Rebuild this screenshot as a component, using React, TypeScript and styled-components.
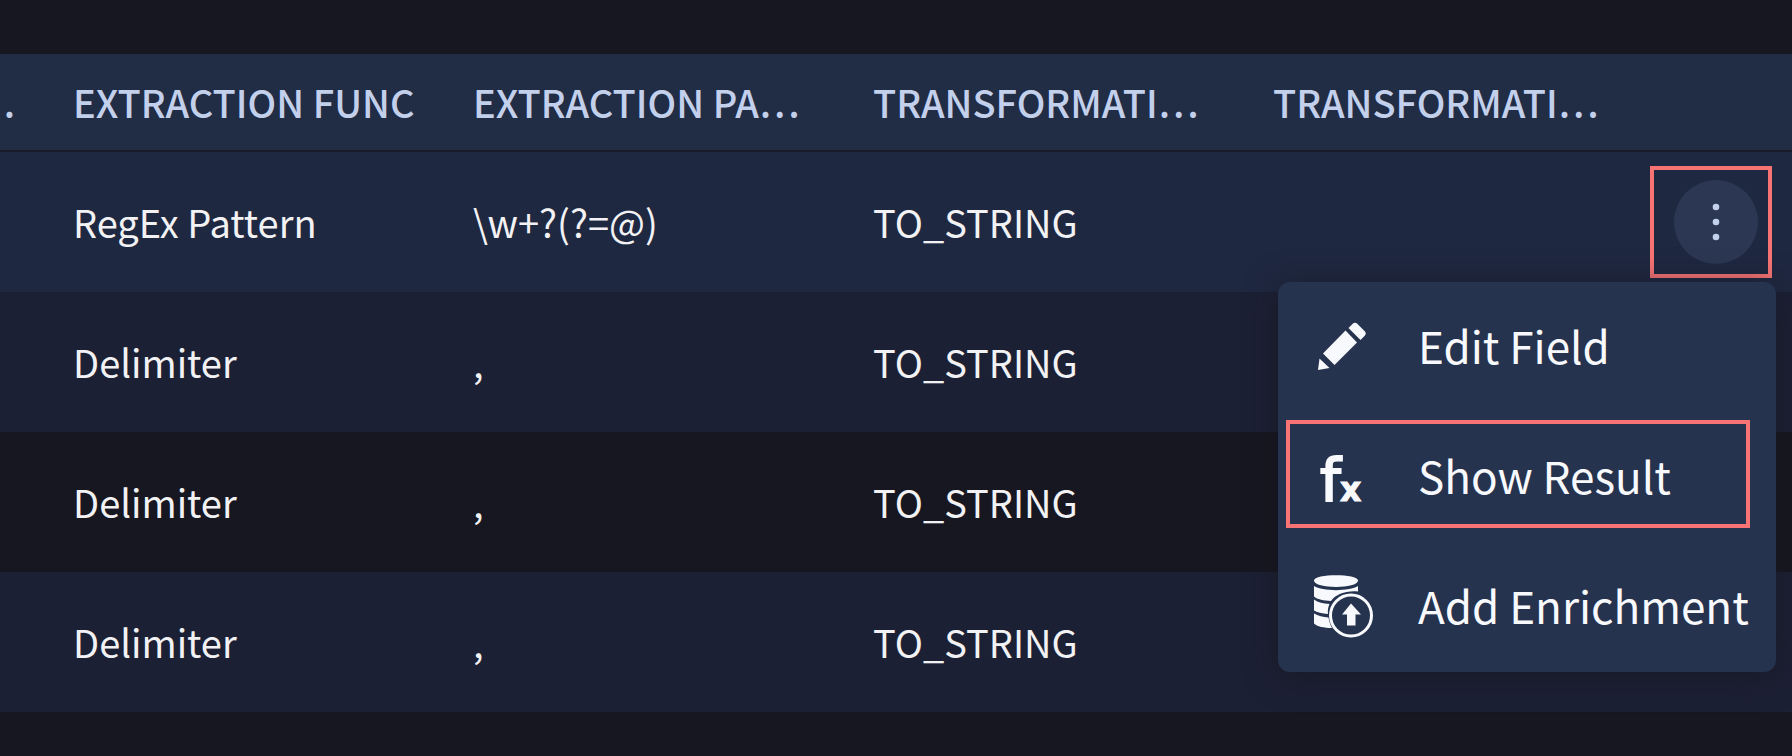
import React from 'react';
import styled, { createGlobalStyle } from 'styled-components';

const GlobalStyle = createGlobalStyle`
  * { box-sizing: border-box; }
  body {
    margin: 0;
    background: #171721;
    color: #f2f2f4;
    font-family: "Noto Sans CJK SC", "Noto Sans", sans-serif;
    overflow-x: hidden;
  }
`;

const Page = styled.main`
  padding: 54px 0 44px;
`;

const Table = styled.table`
  width: 100%;
  table-layout: fixed;
  border-collapse: separate;
  border-spacing: 0;
`;

const Col = styled.col<{ $width?: number }>`
  width: ${(p) => (p.$width ? `${p.$width}px` : 'auto')};
`;

const HeadCell = styled.th<{ $clipped?: boolean }>`
  height: 98px;
  padding: ${(p) => (p.$clipped ? '0 18px 0 0' : '0 24px 0 40px')};
  background: #212c45;
  border-bottom: 2px solid #1a1a29;
  color: #c3d0ec;
  font-size: 38px;
  font-weight: 500;
  line-height: 56px;
  text-align: ${(p) => (p.$clipped ? 'right' : 'left')};
  white-space: nowrap;
`;

const Row = styled.tr<{ $tone: 'active' | 'odd' | 'even' }>`
  background: ${(p) =>
    p.$tone === 'active' ? '#1f2841' : p.$tone === 'odd' ? '#1c2034' : '#171721'};
`;

const Cell = styled.td`
  height: 140px;
  padding: 0 0 0 40px;
  font-size: 38px;
  line-height: 56px;
  white-space: nowrap;
`;

const ActionCell = styled.td`
  position: relative;
  height: 140px;
  padding: 0 20px 0 0;
`;

const ActionFrame = styled.div`
  display: flex;
  align-items: center;
  justify-content: flex-end;
  width: 122px;
  height: 112px;
  margin-left: auto;
  padding-right: 10px;
  border: 4px solid #f87474;
`;

const KebabButton = styled.button`
  display: flex;
  align-items: center;
  justify-content: center;
  width: 84px;
  height: 84px;
  padding: 0;
  border: 0;
  border-radius: 50%;
  background: #2c3853;
  color: #c3d0ec;
`;

const Menu = styled.div`
  position: absolute;
  z-index: 1;
  top: 130px;
  right: 16px;
  width: 498px;
  border-radius: 12px;
  background: #26334f;
  box-shadow: 0 4px 32px rgba(20, 22, 28, 0.6);
`;

const MenuItem = styled.button`
  position: relative;
  display: flex;
  align-items: center;
  gap: 40px;
  width: 100%;
  height: 130px;
  padding: 0 0 4px 36px;
  border: 0;
  background: none;
  color: #f8f9fc;
  font-family: inherit;
  font-size: 44px;
  line-height: 64px;
  text-align: left;
  white-space: nowrap;
`;

const Highlight = styled.span`
  position: absolute;
  inset: 8px 26px 14px 8px;
  border: 4px solid #f87474;
`;

const Icon = styled.svg`
  flex: none;
  display: block;
  overflow: visible;
  fill: currentColor;
`;

const DotsIcon = () => (
  <Icon width="40" height="40" viewBox="0 0 40 40" aria-hidden="true">
    <circle cx="20" cy="5" r="3.3" />
    <circle cx="20" cy="20" r="3.3" />
    <circle cx="20" cy="35" r="3.3" />
  </Icon>
);

const PencilIcon = () => (
  <Icon width="64" height="64" viewBox="0 0 64 64" aria-hidden="true">
    <path d="M4 57 L5.500 45.500 L15.500 55 Z" />
    <path d="M9 40.500 L31.500 17.500 L43 29.500 L20.500 52 Z" />
    <path d="M34.500 15 L38.500 11 Q41 8.500 43.500 11 L50.500 18 Q53 20.500 50.500 23 L46.500 27 Z" />
  </Icon>
);

const FxIcon = () => (
  <Icon
    width="64"
    height="64"
    viewBox="0 0 64 64"
    aria-hidden="true"
    fontFamily="DejaVu Sans, sans-serif"
    stroke="currentColor"
  >
    <text x="6" y="58" fontSize="59" strokeWidth="2">f</text>
    <text x="26" y="58" fontSize="33" fontWeight="700" strokeWidth="1">x</text>
  </Icon>
);

const DatabaseUpIcon = () => (
  <Icon width="64" height="64" viewBox="0 -2 64 64" aria-hidden="true">
    <path d="M0 5.500 C0 -1.500 44 -1.500 44 5.500 C44 14 0 14 0 5.500 Z" />
    <path d="M0 11 C8 16.500 36 16.500 44 11 V16.500 C32 15.500 22 19 17 26 C10 25.500 3 24.500 0 21.500 Z" />
    <path d="M0 24.500 C4 27.500 9 28.500 15.500 29 C14 32.500 13.500 35.500 14 39 C8 38.500 3 37.500 0 35.500 Z" />
    <path d="M0 38.500 C4 41 9 42 14.500 42.500 C15 46 16 49 18 53 C10 53 3 51.500 0 48.500 Z" />
    <circle cx="37" cy="40.500" r="20.500" fill="none" stroke="currentColor" strokeWidth="3" />
    <path d="M37 28.500 L47 39.500 H41.500 V50.500 H33 V39.500 H28 Z" />
  </Icon>
);

const headings = ['EXTRACTION FUNC', 'EXTRACTION PA…', 'TRANSFORMATI…', 'TRANSFORMATI…'];

type Field = { func: string; pattern: string; transform: string };

const fields: Field[] = [
  { func: 'RegEx Pattern', pattern: '\\w+?(?=@)', transform: 'TO_STRING' },
  { func: 'Delimiter', pattern: ',', transform: 'TO_STRING' },
  { func: 'Delimiter', pattern: ',', transform: 'TO_STRING' },
  { func: 'Delimiter', pattern: ',', transform: 'TO_STRING' },
];

const FieldMenu = () => (
  <Menu role="menu">
    <MenuItem role="menuitem">
      <PencilIcon />
      Edit Field
    </MenuItem>
    <MenuItem role="menuitem">
      <FxIcon />
      Show Result
      <Highlight />
    </MenuItem>
    <MenuItem role="menuitem">
      <DatabaseUpIcon />
      Add Enrichment
    </MenuItem>
  </Menu>
);

export default function App() {
  return (
    <Page>
      <GlobalStyle />
      <Table>
        <colgroup>
          <Col $width={33} />
          <Col $width={400} />
          <Col $width={400} />
          <Col $width={400} />
          <Col $width={400} />
          <Col />
        </colgroup>
        <thead>
          <tr>
            <HeadCell $clipped>.</HeadCell>
            {headings.map((heading, i) => (
              <HeadCell key={i}>{heading}</HeadCell>
            ))}
            <HeadCell />
          </tr>
        </thead>
        <tbody>
          {fields.map((field, i) => (
            <Row key={i} $tone={i === 0 ? 'active' : i % 2 ? 'odd' : 'even'}>
              <Cell />
              <Cell>{field.func}</Cell>
              <Cell>{field.pattern}</Cell>
              <Cell>{field.transform}</Cell>
              <Cell />
              <ActionCell>
                {i === 0 && (
                  <>
                    <ActionFrame>
                      <KebabButton aria-label="Field actions" aria-haspopup="menu">
                        <DotsIcon />
                      </KebabButton>
                    </ActionFrame>
                    <FieldMenu />
                  </>
                )}
              </ActionCell>
            </Row>
          ))}
        </tbody>
      </Table>
    </Page>
  );
}
